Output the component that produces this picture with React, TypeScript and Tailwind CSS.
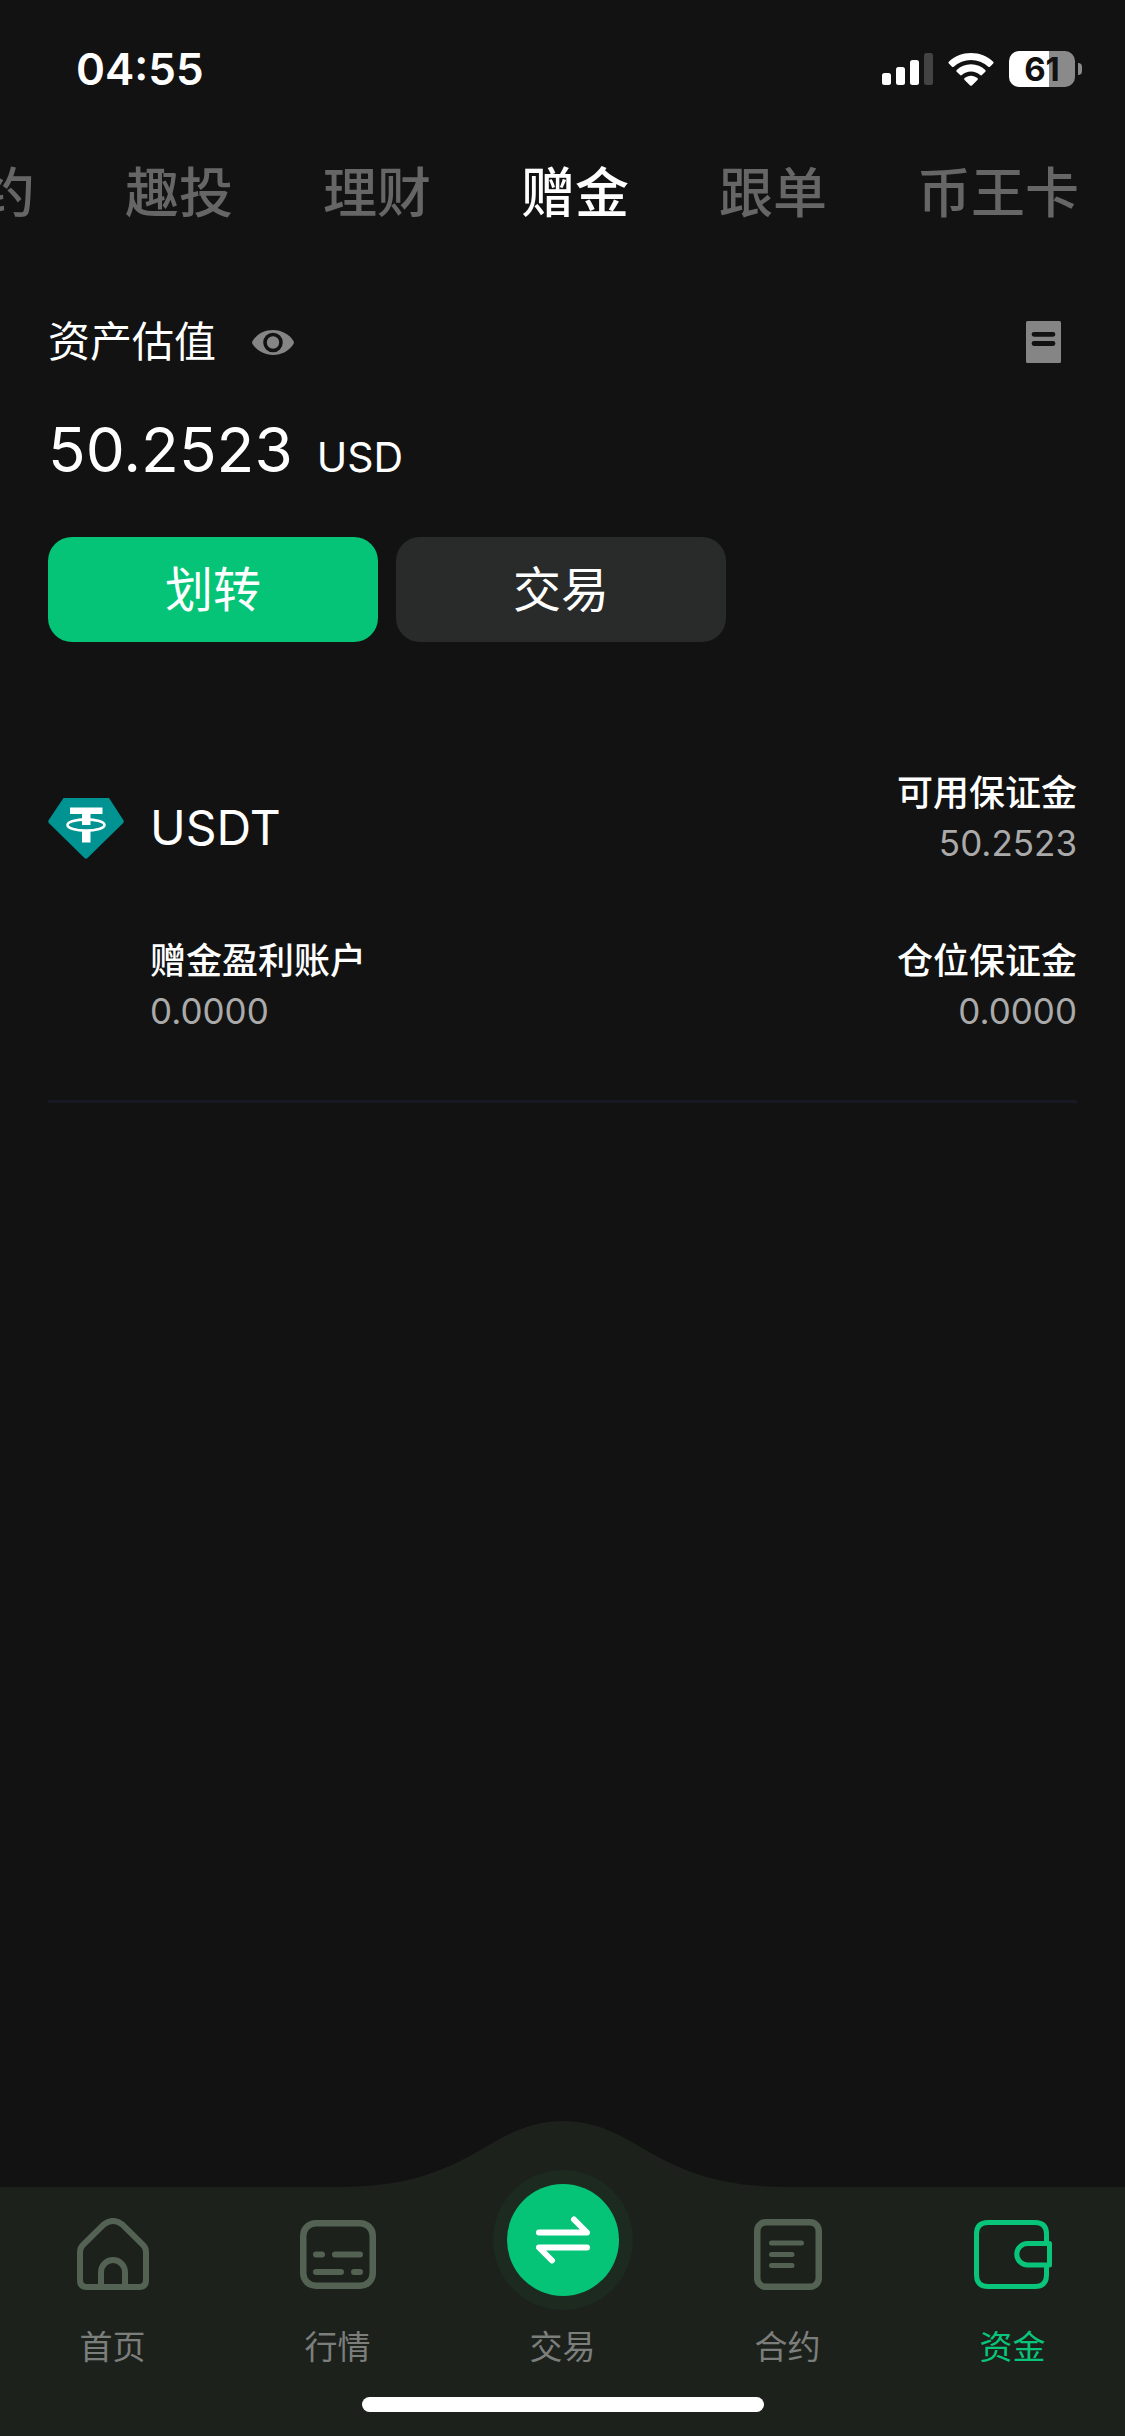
import { useState } from 'react';
import type { ReactNode } from 'react';

const tabs = ['合约', '趣投', '理财', '赠金', '跟单', '币王卡'];

function SignalIcon() {
  return (
    <svg width="51" height="32" viewBox="0 0 51 32" fill="#fff" aria-hidden="true">
      <rect x="0" y="20" width="9" height="12" rx="2.5" />
      <rect x="14" y="14" width="9" height="18" rx="2.5" />
      <rect x="28" y="7" width="9" height="25" rx="2.5" />
      <rect x="42" y="0" width="9" height="32" rx="2.5" fill="#434343" />
    </svg>
  );
}

function WifiIcon() {
  return (
    <svg width="46" height="33" viewBox="0 0 46 33" fill="#fff" aria-hidden="true">
      <path d="M23 0C31.600 0 39.400 3.300 45.200 8.700Q46 9.500 45.200 10.400L42 13.700Q41.200 14.500 40.300 13.700A25.400 25.400 0 0 0 5.700 13.700Q4.800 14.500 4 13.700L0.800 10.400Q0 9.500 0.800 8.700C6.600 3.300 14.400 0 23 0Z" />
      <path d="M23 11.300C28.500 11.300 33.500 13.400 37.300 16.900Q38.200 17.800 37.300 18.700L33.900 22Q33.100 22.800 32.200 22A13.700 13.700 0 0 0 13.800 22Q12.900 22.800 12.100 22L8.700 18.700Q7.800 17.800 8.700 16.900C12.500 13.400 17.500 11.300 23 11.300Z" />
      <path d="M23 22.700C25.500 22.700 27.700 23.600 29.400 25.100Q30.300 26 29.400 26.900L23.900 32.400Q23 33.200 22.100 32.400L16.600 26.900Q15.700 26 16.600 25.100C18.300 23.600 20.500 22.700 23 22.700Z" />
    </svg>
  );
}

function EyeIcon() {
  return (
    <svg width="42" height="25" viewBox="0 0 42 25" aria-hidden="true">
      <path d="M0.500 11C5 4 12.500 0 21 0S37 4 41.500 11Q42.300 12.500 41.500 14C37 21 29.500 25 21 25S5 21 0.500 14Q-0.300 12.500 0.500 11Z" fill="#858585" />
      <circle cx="21" cy="12.500" r="8" fill="#858585" stroke="#121212" strokeWidth="3.600" />
    </svg>
  );
}

function RecordIcon() {
  return (
    <svg width="35" height="42" viewBox="0 0 35 42" aria-hidden="true">
      <rect width="35" height="42" rx="1.500" fill="#858585" />
      <path d="M8 13.300H27M8 22.500H27" stroke="#121212" strokeWidth="4.800" strokeLinecap="round" />
    </svg>
  );
}

function TetherIcon() {
  return (
    <svg width="76" height="61" viewBox="0 0 76 61" aria-hidden="true">
      <path d="M15.500 0H61L75.600 22.500Q76 24 75.200 24.900L39.500 60Q38 61.300 36.500 60L0.800 24.900Q0 24 0.400 22.500Z" fill="#009392" />
      <path d="M22 9.500H54.500V16H42.500V27H34V16H22ZM34 33H42.500V44.500H34Z" fill="#fff" />
      <ellipse cx="38" cy="27" rx="18.500" ry="5.600" fill="none" stroke="#fff" strokeWidth="2.600" />
    </svg>
  );
}

function HomeIcon() {
  return (
    <svg width="72" height="72" viewBox="0 0 72 72" fill="none" stroke="currentColor" strokeWidth="6" aria-hidden="true">
      <path d="M3 34Q3 30 5.800 27.200L26.500 6.700Q36 -0.700 45.500 6.700L66.200 27.200Q69 30 69 34V62Q69 69 62 69H10Q3 69 3 62Z" />
      <path d="M24 69V54A12 12 0 0 1 48 54V69" />
    </svg>
  );
}

function MarketIcon() {
  return (
    <svg width="76" height="69" viewBox="0 0 76 69" fill="none" stroke="currentColor" strokeWidth="6.500" aria-hidden="true">
      <rect x="3.250" y="3.250" width="69.500" height="62.500" rx="12.500" />
      <path d="M16 34.500H22M35 34.500H60M16 52H41M54 52H60" strokeWidth="6" strokeLinecap="round" />
    </svg>
  );
}

function SwapIcon() {
  return (
    <svg width="54" height="48" viewBox="0 0 54 48" fill="none" stroke="#fff" strokeWidth="6" strokeLinecap="round" strokeLinejoin="round" aria-hidden="true">
      <path d="M3 16.500H51L38 3.500" />
      <path d="M51 31.500H3L16 44.500" />
    </svg>
  );
}

function ContractIcon() {
  return (
    <svg width="68" height="71" viewBox="0 0 68 71" fill="none" stroke="currentColor" strokeWidth="6.500" aria-hidden="true">
      <rect x="3.250" y="3.250" width="61.500" height="64.500" rx="8.500" />
      <path d="M17.500 24H47.500M17.500 35.500H38M17.500 46.500H38" strokeWidth="5" strokeLinecap="round" />
    </svg>
  );
}

function WalletIcon() {
  return (
    <svg width="78" height="69" viewBox="0 0 78 69" fill="none" stroke="currentColor" strokeWidth="5" aria-hidden="true">
      <path d="M72.500 23.500V14Q72.500 2.500 61 2.500H14Q2.500 2.500 2.500 14V55Q2.500 66.500 14 66.500H61Q72.500 66.500 72.500 55V45.500" />
      <path d="M75.500 23.500H53.500A10.750 10.750 0 0 0 53.500 45H75.500Z" strokeLinejoin="round" />
    </svg>
  );
}

function StatusBar() {
  return (
    <header className="flex h-[138px] items-center justify-between pl-[76px] pr-[43px]">
      <span className="text-[44px] font-semibold leading-none">04:55</span>
      <div className="flex items-center gap-[15px]">
        <SignalIcon />
        <WifiIcon />
        <div className="flex items-center gap-[3px]">
          <div className="flex h-9 w-[66px] items-center justify-center rounded-[10px] bg-linear-to-r from-white from-61% to-[#8a8a8a] to-61% text-[33px] font-bold leading-none text-[#121212]">
            61
          </div>
          <div className="h-3 w-1 rounded-r-full bg-[#8a8a8a]" />
        </div>
      </div>
    </header>
  );
}

interface AmountProps {
  label: string;
  value: string;
  right?: boolean;
}

function Amount({ label, value, right }: AmountProps) {
  return (
    <dl className={right ? 'text-right' : 'text-left'}>
      <dt className="text-[36px] font-medium leading-[50px]">{label}</dt>
      <dd className="text-[35px] leading-[50px] text-[#aaaaaa]">{value}</dd>
    </dl>
  );
}

interface NavItemProps {
  label: string;
  active?: boolean;
  children: ReactNode;
}

function NavItem({ label, active, children }: NavItemProps) {
  return (
    <a href="#" aria-current={active ? 'page' : undefined} className="flex flex-1 flex-col items-center gap-1">
      <span className={`flex h-[134px] items-center justify-center ${active ? 'text-[#09c579]' : 'text-[#536253]'}`}>
        {children}
      </span>
      <span className={`text-[33px] leading-[44px] ${active ? 'text-[#09c579]' : 'text-[#7c7e7c]'}`}>
        {label}
      </span>
    </a>
  );
}

export default function App() {
  const [aba, setAba] = useState('赠金');
  const [visible, setVisible] = useState(true);

  return (
    <div className="flex min-h-screen flex-col overflow-hidden bg-[#121212] font-['Inter','Noto_Sans_CJK_SC',sans-serif] text-white">
      <StatusBar />

      {/* account tabs, scrolled to the end */}
      <nav className="flex h-28 items-center justify-end gap-[90px] overflow-hidden pr-[46px]">
        {tabs.map((tab) => (
          <button
            key={tab}
            onClick={() => setAba(tab)}
            className={`shrink-0 text-[54px] font-medium leading-none ${aba === tab ? 'text-white' : 'text-[#666666]'}`}
          >
            {tab}
          </button>
        ))}
      </nav>

      <main className="flex flex-1 flex-col px-12">
        <section className="pt-[62px]">
          <div className="flex h-[60px] items-center justify-between pr-4">
            <div className="flex items-center gap-9">
              <h1 className="text-[42px] leading-[60px]">资产估值</h1>
              <button aria-label="显示或隐藏资产" onClick={() => setVisible(!visible)}>
                <EyeIcon />
              </button>
            </div>
            <button aria-label="资金记录">
              <RecordIcon />
            </button>
          </div>

          <p className="mt-[38px] flex items-baseline gap-6 leading-[80px]">
            <span className="text-[62px]">{visible ? '50.2523' : '******'}</span>
            <span className="text-[41px]">USD</span>
          </p>

          <div className="mt-10 flex gap-[18px]">
            <button className="h-[105px] w-[330px] rounded-3xl bg-[#05c478] text-[48px]">划转</button>
            <button className="h-[105px] w-[330px] rounded-3xl bg-[#292b2a] text-[48px]">交易</button>
          </div>
        </section>

        <section className="mt-[126px] border-b-[3px] border-[#181924] pb-16">
          <div className="flex items-end justify-between">
            <div className="flex h-20 items-center gap-[26px]">
              <TetherIcon />
              <h2 className="text-[48px] leading-none">USDT</h2>
            </div>
            <Amount label="可用保证金" value="50.2523" right />
          </div>
          <div className="mt-[68px] flex justify-between pl-[102px]">
            <Amount label="赠金盈利账户" value="0.0000" />
            <Amount label="仓位保证金" value="0.0000" right />
          </div>
        </section>
      </main>

      <footer className="relative bg-[#1c211c]">
        {/* raised part of the bar behind the trade button */}
        <svg className="absolute bottom-full left-1/2 -translate-x-1/2" width="452" height="66" viewBox="0 0 452 66" aria-hidden="true">
          <path d="M0 66C53 66 93 58 140 31C168 14 193 0 226 0S284 14 312 31C359 58 399 66 452 66Z" fill="#1c211c" />
        </svg>

        <nav className="relative flex">
          <NavItem label="首页">
            <HomeIcon />
          </NavItem>
          <NavItem label="行情">
            <MarketIcon />
          </NavItem>
          <NavItem label="交易">
            <span className="-mt-7 flex size-[140px] shrink-0 items-center justify-center rounded-full bg-[#1c2a20]">
              <span className="flex size-28 items-center justify-center rounded-full bg-[#05c478]">
                <SwapIcon />
              </span>
            </span>
          </NavItem>
          <NavItem label="合约">
            <ContractIcon />
          </NavItem>
          <NavItem label="资金" active>
            <WalletIcon />
          </NavItem>
        </nav>

        <div className="mx-auto mb-6 mt-7 h-[15px] w-[402px] rounded-full bg-white" />
      </footer>
    </div>
  );
}
